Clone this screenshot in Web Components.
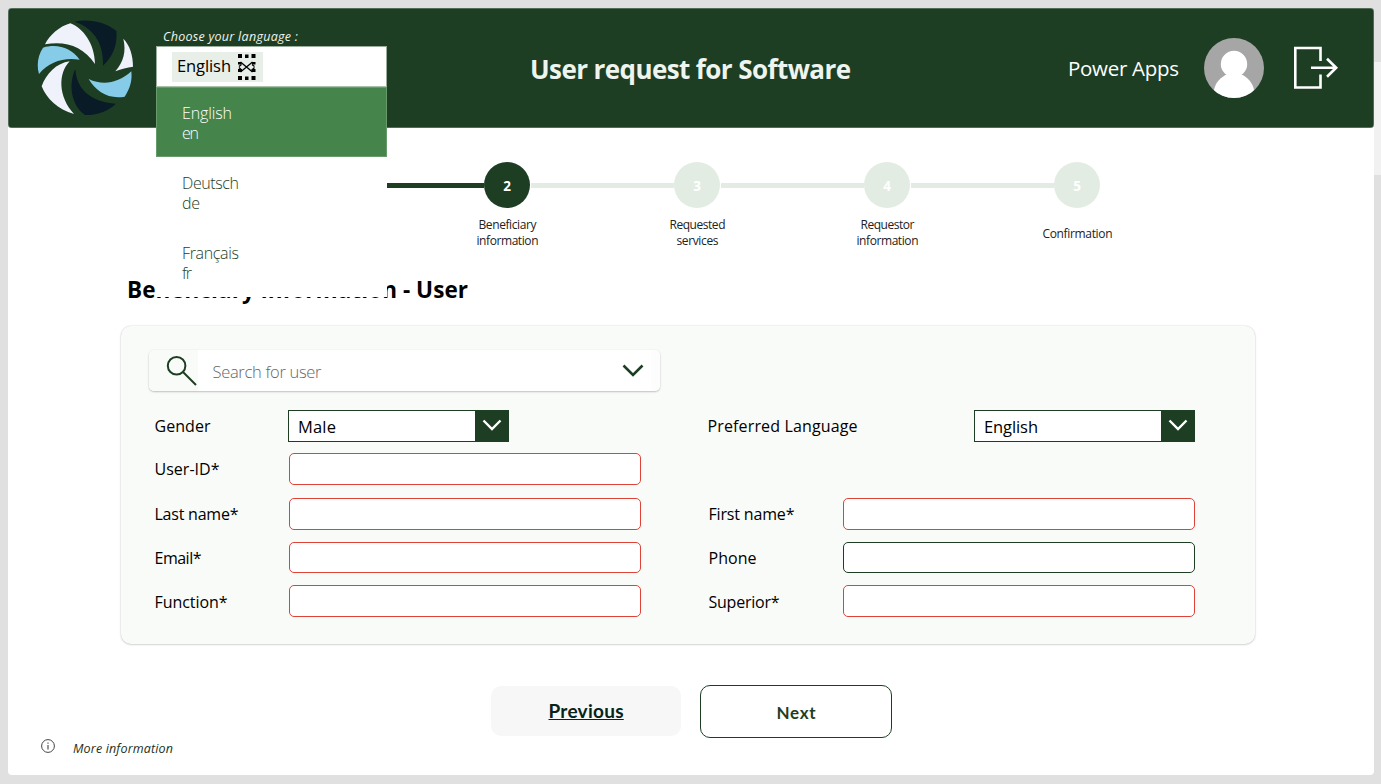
<!DOCTYPE html>
<html lang="en">
<head>
<meta charset="utf-8">
<title>User request for Software</title>
<style>
  html, body { margin: 0; height: 100%; }
  body { background: #e0e0e0; font-family: "Open Sans", "Noto Sans", sans-serif; overflow: hidden; color: #000; display: flex; height: 784px; }
</style>
</head>
<body>
<request-app></request-app>
<script>
const define = (name, html, setup) => customElements.define(name, class extends HTMLElement {
  connectedCallback() {
    if (this.shadowRoot) return;
    const root = this.attachShadow({ mode: 'open' });
    root.innerHTML = typeof html === 'function' ? html(this) : html;
    if (setup) setup(this, root);
  }
});

/* Text run whose tracking is set so that it takes the width given in "w". */
define('fit-text', `<style>:host{display:inline-block;white-space:nowrap}</style><span><slot></slot></span>`, (el, root) => {
  const w = parseFloat(el.getAttribute('w'));
  const n = el.textContent.length;
  const s = root.querySelector('span');
  const natural = s.getBoundingClientRect().width;
  if (w && natural) {
    s.style.letterSpacing = ((w - natural) / (n - 1)).toFixed(3) + 'px';
    el.style.width = w + 'px';
  }
});

define('brand-logo', `<style>:host{display:block;width:96px;height:97px}svg{display:block}</style>
<svg width="96" height="97" viewBox="52 27 288 291">
  <g fill="#eff2fb"><path d="M76 103C90 75 118 50 152 40C190 55 225 100 226 162C190 110 140 92 76 103Z"/>
  <path d="M311 86C330 105 340 135 340 170C322 172 305 177 287 184C312 155 320 125 311 86Z"/>
  <path d="M150 154C115 190 115 260 163 312C115 300 80 265 66 229C80 190 110 160 150 154Z"/></g>
  <g fill="#081b26"><path d="M165 35C205 25 255 35 290 62C294 105 280 140 250 167C252 115 235 60 165 35Z"/>
  <path d="M167 176C170 235 210 275 289 281C265 303 235 316 196 315C155 285 145 225 167 176Z"/></g>
  <g fill="#86cce8"><path d="M335 184C338 210 332 235 315 260C265 268 230 245 207 207C250 228 295 220 335 184Z"/>
  <path d="M58 192C50 165 55 135 70 113C115 100 155 115 180 149C130 142 90 155 58 192Z"/></g>
</svg>`);

define('lang-option', el => `<style>
  :host{display:block;box-sizing:border-box;height:70px;padding:16px 0 0 26px;font-size:16px;line-height:20px;font-weight:300;color:#1e3e24}
  :host([selected]){background:#45844a;color:#fff;box-shadow:inset 0 0 0 1px #ffffff30}
  div{height:20px}
</style><div><fit-text w="${el.getAttribute('w')}">${el.getAttribute('name')}</fit-text></div><div><fit-text w="${el.getAttribute('cw')}">${el.getAttribute('code')}</fit-text></div>`);

define('lang-picker', `<style>
  :host{display:block;width:231px;position:relative;z-index:5}
  .label{height:18px;padding-left:7px;font:italic 12.5px/18px "Open Sans",sans-serif;color:#f0f5f0}
  .box{box-sizing:border-box;height:40px;background:#fff;border:solid #9aac9c;border-width:1px 1px 0 1px;padding:5px 0 0 15px}
  .chip{display:flex;align-items:center;width:91px;height:30px;background:#e8eee8;color:#000;font-size:16.5px;line-height:28px;box-sizing:border-box;padding-left:5px}
  .chip fit-text{margin-top:-2px}
  .chip svg{margin-left:7px}
  .menu{position:absolute;left:0;top:58px;width:231px;height:211px;border-top:1px solid #a9c0ab;box-sizing:border-box;background:#fff}
</style>
<div class="label"><fit-text w="135">Choose your language :</fit-text></div>
<div class="box"><div class="chip"><fit-text w="54">English</fit-text>
<svg width="18" height="26" viewBox="0 0 18 26"><g fill="#000"><path d="M0 0h4v4H0zM7 .5h3.500v3.500H7zM13.500 0h4v4h-4zM0 22h4v4H0zM7 22.500h3.500V26H7zM13.500 22h4v4h-4zM0 8h3.500v2.500H0zM14 8h3.500v2.500H14zM0 15h4v3H0zM13.500 15h4v3h-4z"/></g><path d="M2.500 8L14.500 18M14.500 8L2.500 18M1 12.500l2.500-2M16.500 12.500l-2.500-2M1 13.500l2.500 2.500M16.500 13.500L14 16" stroke="#000" stroke-width="1.300" fill="none"/></svg></div></div>
<div class="menu">
<lang-option selected name="English" code="en" w="50" cw="17"></lang-option>
<lang-option name="Deutsch" code="de" w="57" cw="18"></lang-option>
<lang-option name="Français" code="fr" w="57" cw="10"></lang-option>
</div>`);

define('app-header', `<style>
  :host{display:flex;box-sizing:border-box;width:1366px;height:120px;background:#1e3e24;border-radius:4px;box-shadow:inset 0 0 0 .5px #879989;color:#fff}
  brand-logo{margin:11px 0 0 29px}
  lang-picker{margin:20px 0 0 23px}
  h1{margin:42px 0 0 143px;font-size:26px;line-height:38px;font-weight:700;color:#eef4ee}
  .user{margin:45px 0 0 217px;font-size:20.5px;line-height:30px}
  .avatar{margin:30px 0 0 25px}.exit{margin:38px 0 0 29px}
  svg{display:block}
</style>
<brand-logo></brand-logo><lang-picker></lang-picker>
<h1><fit-text w="321">User request for Software</fit-text></h1>
<div class="user"><fit-text w="111">Power Apps</fit-text></div>
<svg class="avatar" width="60" height="60" viewBox="0 0 60 60"><defs><clipPath id="c"><circle cx="30" cy="30" r="30"/></clipPath></defs><circle cx="30" cy="30" r="30" fill="#a6a6a6"/><g fill="#fff" clip-path="url(#c)"><circle cx="30" cy="26" r="13.200"/><path d="M23.500 36H36.500C43.500 39 49 45 50 52L48 60H12L10 52C11.500 44 17 39 23.500 36Z"/></g></svg>
<svg class="exit" width="46" height="44" viewBox="0 0 46 44"><g fill="none" stroke="#fff" stroke-width="2.600"><path d="M27.500 15V2H2.300V41.500H27.500V28.500"/><path d="M18 21.700H43.500M34 12.700L43.200 21.700L34 30.700"/></g></svg>`);

define('step-item', el => `<style>
  :host{display:block;width:190px;height:110px}
  .track{display:flex;align-items:center;height:46px}
  .l,.r{flex:1;height:5px;margin-top:1px;background:#e3ece3}
  .r{margin-left:1px}
  :host([active]) .l,:host([done]) .l,:host([done]) .r{background:#1e3e24}
  :host([last]) .r{background:none}:host([first]) .l{background:none}
  .dot{width:46px;height:46px;border-radius:50%;background:#e3ece3;color:#fff;font-size:13.5px;font-weight:700;display:flex;align-items:center;justify-content:center;box-sizing:border-box;padding:1px 0 0 1px}
  :host([active]) .dot,:host([done]) .dot{background:#1e3e24}
  .cap{height:34px;margin-top:8px;padding-left:1px;display:flex;flex-direction:column;align-items:center;justify-content:center;font-size:12px;line-height:16px;color:#222}
  :host([last]) .cap{padding-top:1px}
</style><div class="track"><div class="l"></div><div class="dot">${el.getAttribute('n') || ''}</div><div class="r"></div></div><div class="cap"><slot></slot></div>`);

define('step-bar', `<style>:host{display:flex;width:950px;height:100px;margin:34px 0 0 214px}</style>
<step-item first done></step-item>
<step-item active n="2"><fit-text w="58">Beneficiary</fit-text><fit-text w="62">information</fit-text></step-item>
<step-item n="3"><fit-text w="56">Requested</fit-text><fit-text w="42">services</fit-text></step-item>
<step-item n="4"><fit-text w="54">Requestor</fit-text><fit-text w="62">information</fit-text></step-item>
<step-item last n="5"><fit-text w="70">Confirmation</fit-text></step-item>`);

define('select-box', `<style>
  :host{display:flex;box-sizing:border-box;width:221px;height:32px;border:1px solid #1e3e24;background:#fff;font-size:16.5px}
  .v{flex:1;padding-left:9px;line-height:31px}
  .b{width:33px;background:#1e3e24;display:flex;justify-content:center}
  svg{margin-top:8px}
</style><div class="v"><slot></slot></div><div class="b"><svg width="20" height="13" viewBox="0 0 20 13"><path d="M1.500 1.500L10 10L18.500 1.500" fill="none" stroke="#fff" stroke-width="2.400"/></svg></div>`);

define('text-field', `<style>:host{display:block;box-sizing:border-box;width:352px;height:32px;border:1px solid #df4338;border-radius:5px;background:#fff}
:host([optional]){border-color:#1e3e24;height:31px}</style>`);

define('search-box', `<style>
  :host{display:flex;box-sizing:border-box;width:511px;height:41px;background:#fff;border-radius:5px;box-shadow:0 1px 2px #0000003a,0 0 1px #00000026;overflow:hidden}
  .i{width:49px;background:#f9fbf9}.t{flex:1;padding-left:15px;font-size:16.5px;line-height:44px;font-weight:300;color:#666}
  .i svg{margin:5px 0 0 17px}.c{margin:14px 7px 0 0}.e{width:9px;background:#fcfdfc}
</style><div class="i"><svg width="32" height="32" viewBox="0 0 32 32"><g fill="none" stroke="#1e3e24" stroke-width="2"><circle cx="10.600" cy="10.800" r="8.800"/><path d="M17 17L30 30"/></g></svg></div>
<div class="t"><fit-text w="109">Search for user</fit-text></div>
<svg class="c" width="22" height="14" viewBox="0 0 22 14"><path d="M1.500 1.500L11 11L20.500 1.500" fill="none" stroke="#1e3e24" stroke-width="2.600"/></svg><div class="e"></div>`);

define('user-form', `<style>
  :host{display:block;box-sizing:border-box;width:1133.500px;height:318px;margin:18px 0 0 113px;background:#f9fbf9;border-radius:10px;box-shadow:0 0 2px #00000030,0 1px 2px #00000020;padding:24px 0 0 27.500px}
  .grid{display:grid;grid-template-columns:135px 419px 135px 352px;grid-template-rows:43px 45px 44px 43px 32px;margin:19px 0 0 5.500px;align-items:start}
  label{font-size:16px;line-height:32px;height:32px;padding-left:.5px}
  .low{padding-top:1px}
  .s1{margin-left:-1px}.s2{justify-self:end}.wide{grid-column:3/4;margin-left:-1px}
</style>
<search-box></search-box>
<div class="grid">
<label><fit-text w="56">Gender</fit-text></label><select-box class="s1"><fit-text w="38">Male</fit-text></select-box>
<label class="wide"><fit-text w="150">Preferred Language</fit-text></label><select-box class="s2"><fit-text w="54">English</fit-text></select-box>
<label><fit-text w="65">User-ID*</fit-text></label><text-field></text-field><span></span><span></span>
<label><fit-text w="84">Last name*</fit-text></label><text-field></text-field><label><fit-text w="86">First name*</fit-text></label><text-field></text-field>
<label><fit-text w="47">Email*</fit-text></label><text-field style="height:31px"></text-field><label><fit-text w="48">Phone</fit-text></label><text-field optional></text-field>
<label class="low"><fit-text w="73">Function*</fit-text></label><text-field></text-field><label class="low"><fit-text w="71">Superior*</fit-text></label><text-field></text-field>
</div>`);

define('nav-button', `<style>
  :host{display:flex;align-items:center;justify-content:center;box-sizing:border-box;font-family:Lato,sans-serif;font-weight:700;border-radius:10px;width:190px;height:50px;background:#f7f7f7;font-size:19px;color:#06241a;text-decoration:underline;margin-top:1.500px}
  :host([primary]){width:192px;height:53px;margin-top:.5px;background:#fff;border:1px solid #1e3e24;font-size:17px;color:#1e3e24;text-decoration:none;padding-top:2px}
</style><slot></slot>`);

define('page-footer', `<style>:host{display:flex;margin:0 0 0 33px;align-items:flex-start;height:20px;font:italic 12.5px/20px "Open Sans",sans-serif;color:#1e3020}svg{margin-right:18px}</style>
<svg width="14" height="14" viewBox="0 0 14 14"><circle cx="7" cy="7" r="6.400" fill="none" stroke="#444" stroke-width="1"/><path d="M7 6V10.500M7 3.500V4.800" stroke="#444" stroke-width="1.100"/></svg><fit-text w="100">More information</fit-text>`);

define('request-app', `<style>
  :host{display:flex;width:1381px;height:784px}
  main{display:flex;flex-direction:column;width:1366px;height:767px;margin:8px 0 0 8px;background:#fff;border-radius:4px}
  aside{width:7px;height:113px;margin-top:62px;background:#f1f1f1}
  h2{margin:12px 0 2px 119px;font-size:22.500px;line-height:32px;font-weight:700}
  .nav{display:flex;gap:19px;margin:40px 0 0 483px;height:53px}
  page-footer{margin-top:2px}
</style>
<main><app-header></app-header><step-bar></step-bar>
<h2><fit-text w="341">Beneficiary information - User</fit-text></h2>
<user-form></user-form>
<div class="nav"><nav-button><fit-text w="75">Previous</fit-text></nav-button><nav-button primary><fit-text w="39">Next</fit-text></nav-button></div>
<page-footer></page-footer></main><aside></aside>`);
</script>
</body>
</html>
